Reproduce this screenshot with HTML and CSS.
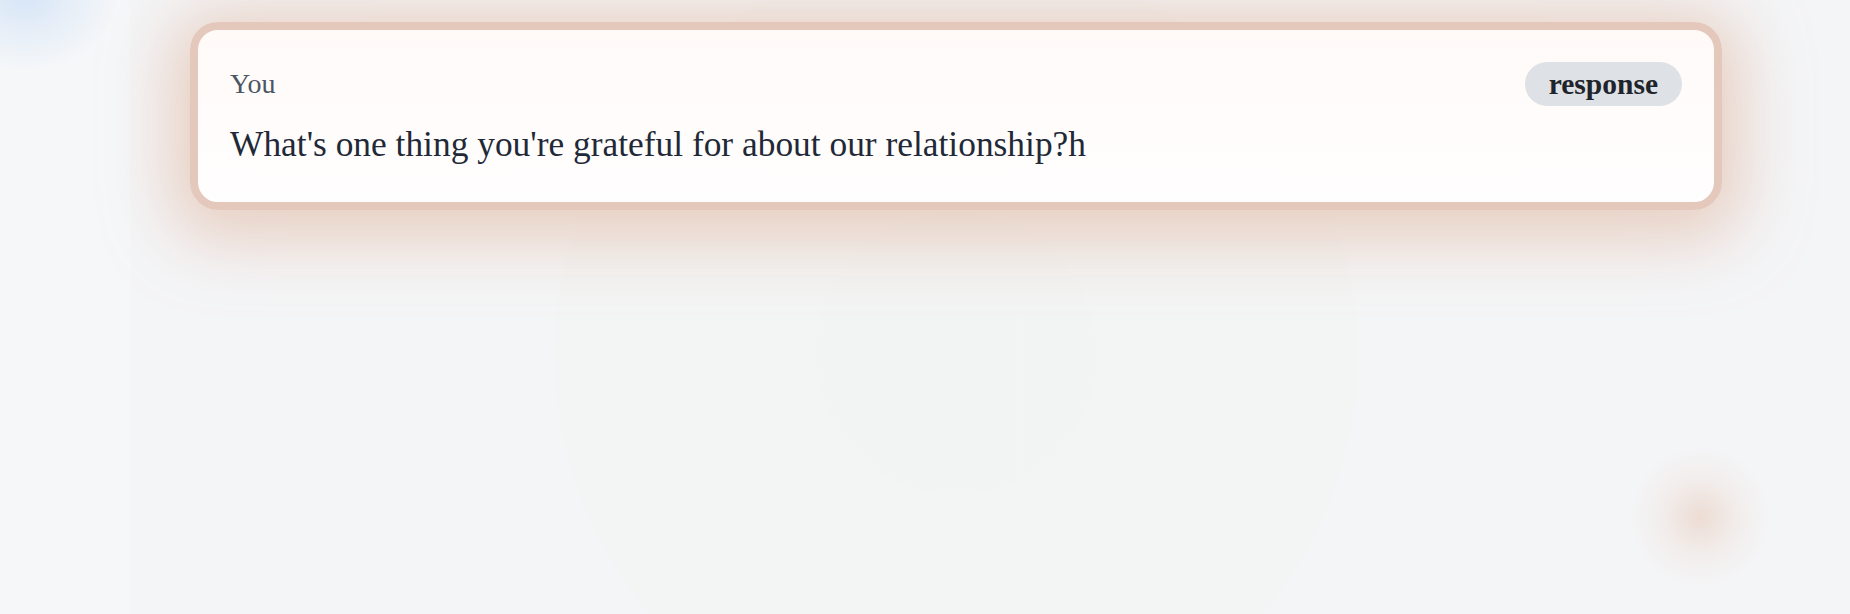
FILE: index.html
```html
<!DOCTYPE html>
<html lang="en">
<head>
<meta charset="utf-8">
<title>Prompt</title>
<link rel="stylesheet" href="styles.css">
</head>
<body>
<div class="app">
  <aside class="side"><div class="blob-blue"></div></aside>
  <main class="main">
    <div class="rings"></div>
    <div class="blob-peach"></div>
    <section class="card">
      <div class="card-inner">
        <header class="card-head">
          <span class="who">You</span>
          <span class="badge">response</span>
        </header>
        <p class="question">What's one thing you're grateful for about our relationship?h</p>
      </div>
    </section>
  </main>
  <div class="gutter"></div>
</div>
</body>
</html>
```

FILE: styles.css
```css
html, body {
  margin: 0;
  padding: 0;
  height: 100%;
  overflow: hidden;
}
body {
  background: #f4f5f7;
  font-family: "Liberation Serif", "Times New Roman", serif;
}
.app {
  display: flex;
  height: 614px;
  position: relative;
}
.side {
  width: 130px;
  flex: none;
  background: #f5f7f9;
  position: relative;
  overflow: hidden;
}
.blob-blue {
  position: absolute;
  left: -70px;
  top: -80px;
  width: 190px;
  height: 150px;
  border-radius: 50%;
  background: radial-gradient(closest-side, rgba(212, 228, 247, 0.95), rgba(222, 233, 247, 0.55) 55%, rgba(240, 244, 250, 0));
}
.gutter {
  flex: 1;
  background: #f4f5f7;
}
.main {
  width: 1652px;
  flex: none;
  box-sizing: border-box;
  padding: 22px 60px 0;
  position: relative;
  background: #f4f5f7;
}
.rings {
  position: absolute;
  left: 0;
  right: 0;
  top: 0;
  bottom: 0;
  background:
    radial-gradient(circle at 826px 354px, rgba(242, 243, 243, 0.7) 0 140px, rgba(0,0,0,0) 142px),
    radial-gradient(circle at 826px 354px, rgba(243, 244, 244, 1) 0 400px, rgba(0,0,0,0) 403px),
    radial-gradient(circle at 826px 354px, rgba(244, 245, 246, 1) 0 680px, rgba(0,0,0,0) 684px);
  pointer-events: none;
}
.blob-peach {
  position: absolute;
  left: 1500px;
  top: 447px;
  width: 140px;
  height: 140px;
  border-radius: 50%;
  background: radial-gradient(closest-side, rgba(235, 214, 203, 0.8), rgba(239, 226, 219, 0.4) 55%, rgba(243, 244, 245, 0));
}
.card {
  position: relative;
  border: 8px solid #e3c8bb;
  border-radius: 28px;
  background: linear-gradient(180deg, #fffaf8 0%, #fffefe 100%);
  box-shadow: 0 10px 64px 20px rgba(224, 184, 162, 0.62);
}
.card-inner {
  padding: 32px 32px 35px;
}
.card-head {
  display: flex;
  justify-content: space-between;
  align-items: center;
  height: 44px;
}
.who {
  font-size: 28px;
  color: #4b5563;
}
.badge {
  display: inline-flex;
  align-items: center;
  height: 44px;
  padding: 0 24px;
  border-radius: 22px;
  background: #dee1e5;
  color: #1f242b;
  font-weight: 700;
  font-size: 29.5px;
}
.question {
  margin: 16px 0 0;
  font-size: 35.4px;
  line-height: 45px;
  color: #1f2937;
}
```
